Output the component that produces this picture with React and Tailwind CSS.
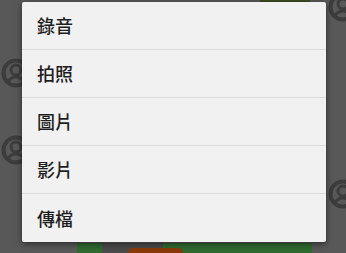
import React from 'react';

const items = ['錄音', '拍照', '圖片', '影片', '傳檔'];

const Avatar = () => (
  <svg width="30" height="30" viewBox="0 0 30 30" className="shrink-0">
    <circle cx="15" cy="15" r="12.5" fill="none" stroke="#3c3c3c" strokeWidth="4" />
    <circle cx="15" cy="12" r="5" fill="none" stroke="#3c3c3c" strokeWidth="3" />
    <path d="M7 24c2-4 5-5 8-5s6 1 8 5" fill="none" stroke="#3c3c3c" strokeWidth="3" />
  </svg>
);

export default function App() {
  return (
    <div className="relative w-[346px] h-[253px] overflow-hidden bg-[#585858]" style={{ fontFamily: '"Noto Sans CJK TC", "Noto Sans", sans-serif' }}>
      {/* dimmed page behind the dialog */}
      <div className="flex h-full">
        <div className="w-[77px] flex flex-col items-start pl-[1px] pt-[58px] gap-[47px]">
          <Avatar />
          <Avatar />
        </div>
        <div className="flex-1 flex flex-col">
          <div className="flex-1 flex justify-end pr-[14px]">
            <div className="w-[50px] h-[3px] bg-[#3b4a22]" />
          </div>
          <div className="h-[10px] flex">
            <div className="w-[25px] bg-[#2f6a2f]" />
            <div className="w-[61px] bg-[#4a4a4a] flex items-end">
              <div className="ml-[26px] w-[35px] h-[5px] rounded-tl-[6px] bg-[#8a3a0a]" />
            </div>
            <div className="w-[149px] bg-[#2f6a2f] flex items-end">
              <div className="w-[20px] h-[5px] rounded-tr-[6px] bg-[#8a3a0a]" />
            </div>
          </div>
        </div>
        <div className="w-[22px] flex flex-col items-start pt-[-8px] gap-[157px] -mt-[8px] pl-[4px]">
          <Avatar />
          <Avatar />
        </div>
      </div>

      {/* dialog */}
      <div className="absolute left-[22px] top-[2px] w-[304px] bg-[#f1f1f1] rounded-[2px] shadow-[0_2px_6px_rgba(0,0,0,0.5)]">
        {items.map((t, i) => (
          <div
            key={t}
            className={`h-[48px] flex items-center pl-[15px] text-[18px] font-medium text-[#1e1e1e] ${i < items.length - 1 ? 'border-b border-[#dedede]' : ''}`}
          >
            {t}
          </div>
        ))}
      </div>
    </div>
  );
}
